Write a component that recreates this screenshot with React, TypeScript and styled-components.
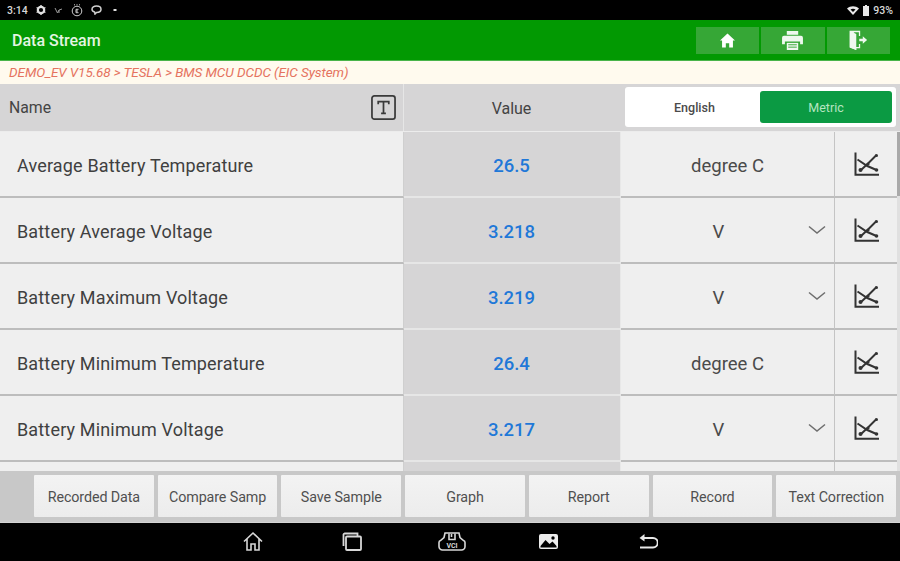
import React from "react";
import styled, { createGlobalStyle } from "styled-components";

const Global = createGlobalStyle`
  html, body { margin: 0; padding: 0; background: #000; }
  * { box-sizing: border-box; }
  #root { width: 900px; height: 561px; overflow: hidden; }
`;
const Page = styled.div`
  width: 900px; height: 561px; display: flex; flex-direction: column;
  font-family: Roboto, "Liberation Sans", sans-serif; background: #e2e2e2;
`;
const StatusBar = styled.div`
  height: 20px; flex: none; background: #000; color: #d8d8d8; display: flex; align-items: center;
  justify-content: space-between; padding: 0 7px 0 7px; font-size: 10.5px; font-weight: 500;
`;
const StatusGroup = styled.div<{ $gap?: number }>`
  display: flex; align-items: center; gap: ${(p) => p.$gap ?? 7}px;
`;
const Header = styled.div`
  height: 41px; flex: none; background: #029902; border-bottom: 1px solid #49b449;
  display: flex; align-items: center; justify-content: space-between; padding: 0 10px 0 12px;
`;
const Title = styled.div`
  color: #e4f5e2; font-size: 16px; font-weight: 500; padding-top: 1px;
`;
const HeaderActions = styled.div`display: flex; gap: 2px;`;
const HeaderButton = styled.div`
  width: 63.5px; height: 27px; background: #36a736; display: flex; align-items: center; justify-content: center;
`;
const Crumb = styled.div`
  height: 23px; flex: none; background: #fffaee; color: #e5735f; font-size: 13.5px; font-style: italic;
  display: flex; align-items: center; padding: 0 0 1px 9px; letter-spacing: -0.08px;
`;
const HeadRow = styled.div`
  height: 48px; flex: none; display: grid; grid-template-columns: 404px 217px 279px; background: #d6d5d6;
  border-bottom: 1px solid #ececec;
`;
const HeadName = styled.div`
  display: flex; align-items: center; justify-content: space-between; padding: 0 7px 1px 9px;
  border-right: 1px solid #e6e6e6; color: #444; font-size: 15.8px;
`;
const HeadValue = styled.div`
  display: flex; align-items: center; justify-content: center; color: #444; font-size: 16px; padding: 1px 2px 0 0;
`;
const Toggle = styled.div`
  align-self: center; margin: 0 4px 1px 4px; height: 40px; background: #fff; border-radius: 3px; padding: 4px;
  display: grid; grid-template-columns: 1fr 132px; align-items: stretch;
`;
const ToggleItem = styled.div<{ $on?: boolean }>`
  display: flex; align-items: center; justify-content: center; font-size: 12.5px; border-radius: 3px;
  font-weight: ${(p) => (p.$on ? 400 : 500)};
  color: ${(p) => (p.$on ? "#b5e5c0" : "#4a4a4a")}; background: ${(p) => (p.$on ? "#0b9a43" : "transparent")};
`;
const Rows = styled.div`
  flex: 1; min-height: 0; overflow: hidden; background: #e0e0e0; position: relative;
`;
const Row = styled.div`
  height: 66px; display: grid; grid-template-columns: 404px 217px 214px 62px; margin-right: 3px;
`;
const NameCell = styled.div`
  background: #efefef; border-right: 1px solid #cfcfcf; border-bottom: 2px solid #bdbdbd; display: flex;
  align-items: center; padding: 3px 0 0 17px; font-size: 18px; color: #404040; letter-spacing: 0.16px;
`;
const ValueCell = styled.div`
  background: #d6d5d6; display: flex; align-items: center; justify-content: center; color: #1f78d8;
  font-size: 18.5px; font-weight: 500; padding: 3px 1px 0 0;
  border-right: 1px solid #e8e8e8; border-bottom: 2px solid #e6e6e6;
`;
const UnitCell = styled.div`
  background: #efefef; border-right: 1px solid #c4c4c4; border-bottom: 2px solid #bdbdbd; display: flex;
  align-items: center; justify-content: center; position: relative; font-size: 18.5px; color: #4a4a4a; padding-top: 3px;
`;
const UnitSelectText = styled.span`margin-right: 18px;`;
const Chevron = styled.svg`
  position: absolute; right: 7px; top: 50%; margin-top: -5px;
`;
const GraphCell = styled.div`
  background: #efefef; border-bottom: 2px solid #bdbdbd; display: flex; align-items: center; justify-content: center;
  padding: 1px 0 0 1px;
`;
const Scroll = styled.div`
  position: absolute; right: 0; top: 0; width: 3px; height: 64px; background: #a9a9a9;
`;
const ActionBar = styled.div`
  height: 52px; flex: none; background: #c8c8c8; display: flex; gap: 4px; padding: 4px 4px 5px 34px;
  border-bottom: 1px solid #d4d4d4;
`;
const ActionButton = styled.div`
  flex: 1; min-width: 0; background: linear-gradient(#f3f3f3, #ececec); display: flex; align-items: center;
  justify-content: center; color: #505050; font-size: 14.3px; white-space: nowrap; border-radius: 1px;
  letter-spacing: -0.1px; overflow: hidden; padding-top: 2px;
`;
const NavBar = styled.div`
  height: 38px; flex: none; background: #000; display: flex; align-items: center; padding: 0 0 2px 243px;
`;
const NavSlot = styled.div<{ $w?: number }>`
  width: ${(p) => p.$w ?? 97.5}px; display: flex; align-items: center;
`;

const GraphIcon = () => (
  <svg width="26" height="25" viewBox="0 0 26 25" fill="none" stroke="#333" strokeWidth="2">
    <path d="M1.500 0.500V22.800H25" />
    <path d="M6.500 18.500L14 11.500 22.500 3" strokeWidth="2" />
    <path d="M3.500 7.500L13.300 14 22.500 18" strokeWidth="2" />
    <circle cx="6.500" cy="18" r="2" fill="#333" stroke="none" />
    <circle cx="22.500" cy="18" r="1.800" fill="#333" stroke="none" />
    <circle cx="14" cy="12" r="1.600" fill="#333" stroke="none" />
    <circle cx="22.500" cy="3.500" r="1.500" fill="#333" stroke="none" />
  </svg>
);
const ChevronIcon = () => (
  <Chevron width="20" height="10" viewBox="0 0 20 10" fill="none" stroke="#6e6e6e" strokeWidth="1.500">
    <path d="M2 1.500l8 6.500 8-6.500" />
  </Chevron>
);

const rows: { name: string; value: string; unit: string; select?: boolean }[] = [
  { name: "Average Battery Temperature", value: "26.5", unit: "degree C" },
  { name: "Battery Average Voltage", value: "3.218", unit: "V", select: true },
  { name: "Battery Maximum Voltage", value: "3.219", unit: "V", select: true },
  { name: "Battery Minimum Temperature", value: "26.4", unit: "degree C" },
  { name: "Battery Minimum Voltage", value: "3.217", unit: "V", select: true },
  { name: "", value: "", unit: "" },
];
const actions = ["Recorded Data", "Compare Samp", "Save Sample", "Graph", "Report", "Record", "Text Correction"];

export default function App() {
  return (
    <Page>
      <Global />
      <StatusBar>
        <StatusGroup $gap={8}>
          <span>3:14</span>
          <svg width="10" height="10" viewBox="0 0 10 10"><circle cx="5" cy="5" r="3.200" fill="none" stroke="#e0e0e0" strokeWidth="2.200" /><path d="M5 0v2M5 8v2M0.600 2.500l1.700 1M7.700 6.500l1.700 1M0.600 7.500l1.700-1M7.700 3.500l1.700-1" stroke="#e0e0e0" strokeWidth="1.400" /></svg>
          <svg width="9" height="9" viewBox="0 0 9 9" fill="none" stroke="#9a9a9a" strokeWidth="1"><path d="M1 2l2.500 5L5 4M5 4l3-1M5 4v3" /></svg>
          <svg width="12" height="13" viewBox="0 0 12 13" fill="none" stroke="#cfcfcf" strokeWidth="1"><circle cx="6" cy="7" r="4.800" /><path d="M7.500 5.300H5v3.400h2.500M5 7h2" /><path d="M3 .8h1M5.500 .8h1M8 .8h1" /></svg>
          <svg width="11" height="10" viewBox="0 0 11 10" fill="none" stroke="#d0d0d0" strokeWidth="1.500"><path d="M5.500 1C8 1 10 2.200 10 4.200S8 7.400 5.500 7.400L4 9 3.600 7C2 6.600 1 5.600 1 4.200 1 2.200 3 1 5.500 1z" /></svg>
          <svg width="4" height="4" viewBox="0 0 4 4" style={{ marginLeft: 3 }}><rect x="0.500" y="1" width="3" height="2" fill="#e0e0e0" /></svg>
        </StatusGroup>
        <StatusGroup $gap={4}>
          <svg width="12" height="9" viewBox="0 0 12 9"><path d="M0 2.500C3.500-.6 8.500-.6 12 2.500L6 9z" fill="#e8e8e8" /><path d="M3.500 3.400C5 2.500 7 2.500 8.500 3.400L6 6z" fill="#000" /></svg>
          <svg width="6" height="11" viewBox="0 0 6 11"><path d="M2 0h2v1h2v10H0V1h2z" fill="#e8e8e8" /></svg>
          <span>93%</span>
        </StatusGroup>
      </StatusBar>
      <Header>
        <Title>Data Stream</Title>
        <HeaderActions>
          <HeaderButton>
            <svg width="15" height="15" viewBox="0 0 16 15" fill="#fff"><path d="M8 0l8 7.500h-2.200V15H9.800v-4.500H6.200V15H2.200V7.500H0z" /></svg>
          </HeaderButton>
          <HeaderButton>
            <svg width="21" height="19" viewBox="0 0 22 20" fill="#eef8ee"><path d="M5 0h12v4H5z" /><path d="M2 5h18a2 2 0 0 1 2 2v7h-3v-3H3v3H0V7a2 2 0 0 1 2-2z" /><path d="M5 12.500h12V20H5z" /><path d="M6.500 14.500h9M6.500 17h9" stroke="#36a736" strokeWidth="1" /></svg>
          </HeaderButton>
          <HeaderButton>
            <svg width="20" height="20" viewBox="0 0 21 23" fill="#eef8ee"><path d="M1 1h12v6h-1.500V2.500H6.500l-1 .6V19.500h6V16H13v5H8.500v2L1 20z" /><path d="M1 1l7.500 3.500V23L1 20z" /><path d="M12 10h4V7.200l5 4.300-5 4.300V13h-4z" /></svg>
          </HeaderButton>
        </HeaderActions>
      </Header>
      <Crumb>DEMO_EV V15.68 &gt; TESLA &gt; BMS MCU DCDC (EIC System)</Crumb>
      <HeadRow>
        <HeadName>
          Name
          <svg width="25" height="25" viewBox="0 0 26 26" fill="none"><rect x="1" y="1" width="24" height="24" rx="2.500" stroke="#3a3a3a" strokeWidth="1.800" /><path d="M7.500 9.500V7h11v2.500M13 7v12M10.500 19h5" stroke="#3a3a3a" strokeWidth="1.800" /></svg>
        </HeadName>
        <HeadValue>Value</HeadValue>
        <Toggle>
          <ToggleItem>English</ToggleItem>
          <ToggleItem $on>Metric</ToggleItem>
        </Toggle>
      </HeadRow>
      <Rows>
        {rows.map((r, i) => (
          <Row key={i}>
            <NameCell>{r.name}</NameCell>
            <ValueCell>{r.value}</ValueCell>
            <UnitCell>
              {r.select ? <UnitSelectText>{r.unit}</UnitSelectText> : r.unit}
              {r.select && <ChevronIcon />}
            </UnitCell>
            <GraphCell>{r.name && <GraphIcon />}</GraphCell>
          </Row>
        ))}
        <Scroll />
      </Rows>
      <ActionBar>
        {actions.map((a) => (
          <ActionButton key={a}>{a}</ActionButton>
        ))}
      </ActionBar>
      <NavBar>
        <NavSlot>
          <svg width="20" height="21" viewBox="0 0 20 21" fill="none" stroke="#d8d8d8" strokeWidth="1.600"><path d="M1 10.500L10 2l9 8.500M4 8v11h4v-6h4v6h4V8" /></svg>
        </NavSlot>
        <NavSlot>
          <svg width="21" height="19" viewBox="0 0 21 19" fill="none" stroke="#d8d8d8" strokeWidth="1.800"><path d="M2.500 14V2.500a1.500 1.500 0 0 1 1-1H16.500V4" /><rect x="5" y="4.500" width="15" height="13.500" rx="1" /></svg>
        </NavSlot>
        <NavSlot $w={101}>
          <svg width="28" height="19" viewBox="0 0 28 19" fill="none" stroke="#d8d8d8" strokeWidth="1.600"><path d="M7 1h14l1 4.500 3.500 3a2 2 0 0 1 1.500 2v4a3.500 3.500 0 0 1-3.500 3.500h-19A3.500 3.500 0 0 1 1 14.500v-4a2 2 0 0 1 1.500-2L6 5.500z" /><path d="M11 1.500v6h6v-6M13.500 2v3" /><text x="14" y="15.500" textAnchor="middle" fontSize="7" fontWeight="700" fill="#d8d8d8" stroke="none" fontFamily="Roboto, sans-serif">VCI</text></svg>
        </NavSlot>
        <NavSlot $w={99}>
          <svg width="19" height="15" viewBox="0 0 19 15"><rect width="19" height="15" rx="2" fill="#ececec" /><path d="M1.500 12l5-6 4 4 3-2.500 4 4.500V13.500H1.500z" fill="#000" /><circle cx="14" cy="4" r="1.700" fill="#000" /></svg>
        </NavSlot>
        <NavSlot>
          <svg width="20" height="17" viewBox="0 0 20 17" fill="none" stroke="#e8e8e8" strokeWidth="2"><path d="M4 5h11a4 4 0 0 1 0 9.500H2" /><path d="M6.500 1L1.500 5l5 3.500" fill="#e8e8e8" stroke="none" /></svg>
        </NavSlot>
      </NavBar>
    </Page>
  );
}
